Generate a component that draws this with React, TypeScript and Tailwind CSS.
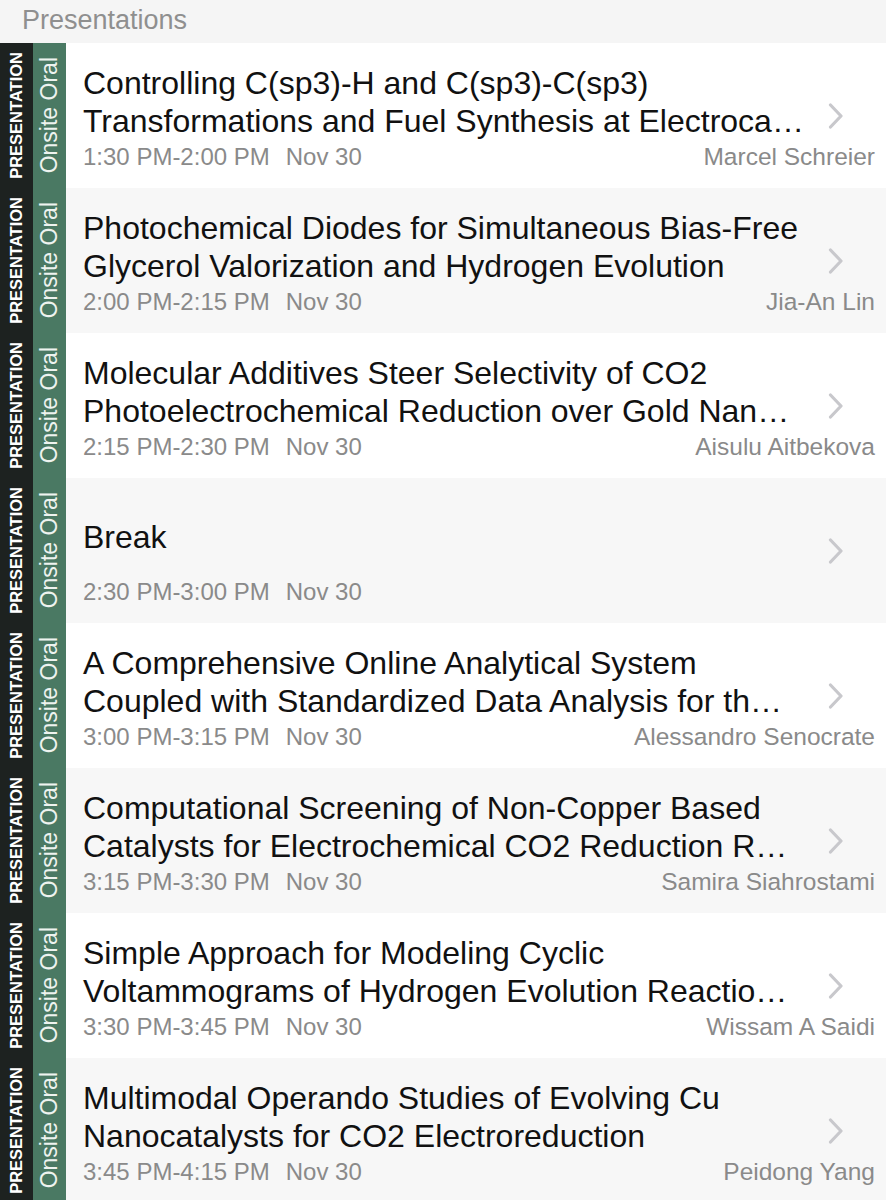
import React from "react";

type Item = {
  l1: string;
  l2?: string;
  time: string;
  author?: string;
};

const items: Item[] = [
  {
    l1: "Controlling C(sp3)-H and C(sp3)-C(sp3)",
    l2: "Transformations and Fuel Synthesis at Electroca…",
    time: "1:30 PM-2:00 PM",
    author: "Marcel Schreier",
  },
  {
    l1: "Photochemical Diodes for Simultaneous Bias-Free",
    l2: "Glycerol Valorization and Hydrogen Evolution",
    time: "2:00 PM-2:15 PM",
    author: "Jia-An Lin",
  },
  {
    l1: "Molecular Additives Steer Selectivity of CO2",
    l2: "Photoelectrochemical Reduction over Gold Nan…",
    time: "2:15 PM-2:30 PM",
    author: "Aisulu Aitbekova",
  },
  { l1: "Break", time: "2:30 PM-3:00 PM" },
  {
    l1: "A Comprehensive Online Analytical System",
    l2: "Coupled with Standardized Data Analysis for th…",
    time: "3:00 PM-3:15 PM",
    author: "Alessandro Senocrate",
  },
  {
    l1: "Computational Screening of Non-Copper Based",
    l2: "Catalysts for Electrochemical CO2 Reduction R…",
    time: "3:15 PM-3:30 PM",
    author: "Samira Siahrostami",
  },
  {
    l1: "Simple Approach for Modeling Cyclic",
    l2: "Voltammograms of Hydrogen Evolution Reactio…",
    time: "3:30 PM-3:45 PM",
    author: "Wissam A Saidi",
  },
  {
    l1: "Multimodal Operando Studies of Evolving Cu",
    l2: "Nanocatalysts for CO2 Electroreduction",
    time: "3:45 PM-4:15 PM",
    author: "Peidong Yang",
  },
];

function Chevron() {
  return (
    <svg width="16" height="26" viewBox="0 0 16 26" fill="none">
      <polyline
        points="2.5,2 13,13 2.5,24"
        stroke="#c8c8cc"
        strokeWidth="3.2"
        strokeLinecap="round"
        strokeLinejoin="round"
      />
    </svg>
  );
}

function Row({ item, gray }: { item: Item; gray: boolean }) {
  return (
    <div className={`flex h-[145px] ${gray ? "bg-[#f7f7f7]" : "bg-white"}`}>
      <div className="flex w-[33px] shrink-0 items-center justify-center bg-[#1d2220]">
        <span className="rotate-180 text-[16.5px] font-bold leading-none text-white [writing-mode:vertical-rl]">
          PRESENTATION
        </span>
      </div>
      <div className="flex w-[33px] shrink-0 items-center justify-center bg-[#4a7963]">
        <span className="rotate-180 text-[23px] leading-none text-[#eef3ef] [writing-mode:vertical-rl]">
          Onsite Oral
        </span>
      </div>
      <div className="relative flex min-w-0 flex-1 flex-col pl-[17px] pr-[11px] pt-[16px]">
        <div className="flex h-[86px] flex-col justify-center text-[32px] leading-[38px] text-[#111]">
          <div className="whitespace-nowrap">{item.l1}</div>
          {item.l2 && <div className="whitespace-nowrap">{item.l2}</div>}
        </div>
        <div className="flex items-baseline justify-between text-[24px] leading-[24px] text-[#8a8a8a]">
          <div className="flex gap-[16px] whitespace-nowrap">
            <span>{item.time}</span>
            <span>Nov 30</span>
          </div>
          {item.author && <span className="whitespace-nowrap text-[24.5px]">{item.author}</span>}
        </div>
        <div className="absolute right-[42px] top-1/2 -translate-y-1/2">
          <Chevron />
        </div>
      </div>
    </div>
  );
}

export default function App() {
  return (
    <div
      className="h-[1200px] w-[886px] overflow-hidden bg-white"
      style={{ fontFamily: '"Liberation Sans", Arial, sans-serif' }}
    >
      <div className="flex h-[43px] items-center bg-[#f5f5f5] pl-[22px] text-[27px] leading-none text-[#8f8f8f]">
        <span className="-mt-[3px]">Presentations</span>
      </div>
      {items.map((it, i) => (
        <Row key={i} item={it} gray={i % 2 === 1} />
      ))}
    </div>
  );
}
